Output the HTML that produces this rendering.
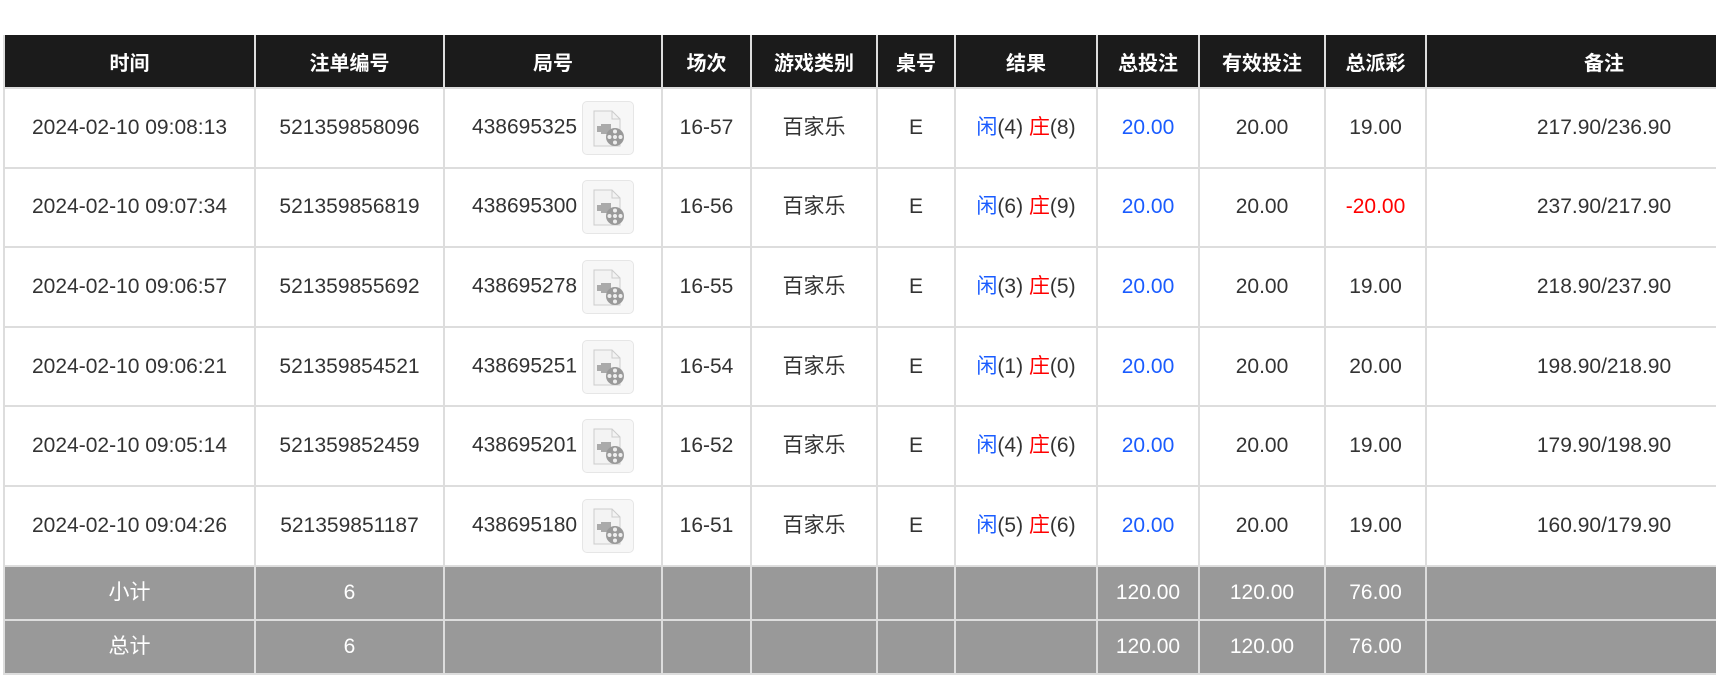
<!DOCTYPE html>
<html><head><meta charset="utf-8"><style>
html,body{margin:0;padding:0;background:#fff;width:1716px;height:691px;overflow:hidden}
table{position:absolute;left:3px;top:35px;border-collapse:collapse;table-layout:fixed;width:1780px;font-family:"Liberation Sans","Noto Sans CJK SC",sans-serif;font-size:21px;color:#333}
th{background:#1b1b1b;color:#fff;font-weight:bold;font-size:20px;height:52px;border:2px solid #ddd;border-top:none;padding:0;text-align:center}
td{height:77.6px;border:2px solid #ddd;padding:0;text-align:center;line-height:24px}
tr.f td{background:#999;color:#fff;height:52px}
.b{color:#1a5cff}.r{color:#f00}
.ic{display:inline-block;width:50px;height:52px;border:1px solid #e6e6e6;border-radius:5px;background:#f7f7f7;vertical-align:middle;margin-left:5px;position:relative}
.ic svg{position:absolute;left:8px;top:8px}
</style></head><body>
<table>
<colgroup><col style="width:251px"><col style="width:189px"><col style="width:218px"><col style="width:89px"><col style="width:126px"><col style="width:78px"><col style="width:142px"><col style="width:102px"><col style="width:126px"><col style="width:101px"><col></colgroup>
<tr><th>时间</th><th>注单编号</th><th>局号</th><th>场次</th><th>游戏类别</th><th>桌号</th><th>结果</th><th>总投注</th><th>有效投注</th><th>总派彩</th><th>备注</th></tr>
<tr><td>2024-02-10 09:08:13</td><td>521359858096</td><td>438695325<span class="ic"><svg width="36" height="38" viewBox="0 0 36 38"><path d="M3 1h18l8 8v27H3z" fill="#f3f3f3" stroke="#ccc"/><path d="M21 1v8h8" fill="none" stroke="#ccc"/><path d="M6 16h4v-2h10v10H10v-2H6z" fill="#aaa"/><circle cx="24" cy="27" r="9" fill="#999"/><circle cx="24" cy="27" r="2" fill="#eee"/><circle cx="24" cy="21.5" r="2" fill="#eee"/><circle cx="24" cy="32.5" r="2" fill="#eee"/><circle cx="18.5" cy="27" r="2" fill="#eee"/><circle cx="29.5" cy="27" r="2" fill="#eee"/></svg></span></td><td>16-57</td><td>百家乐</td><td>E</td><td><span class="b">闲</span>(4) <span class="r">庄</span>(8)</td><td class="b">20.00</td><td>20.00</td><td>19.00</td><td>217.90/236.90</td></tr>
<tr><td>2024-02-10 09:07:34</td><td>521359856819</td><td>438695300<span class="ic"><svg width="36" height="38" viewBox="0 0 36 38"><path d="M3 1h18l8 8v27H3z" fill="#f3f3f3" stroke="#ccc"/><path d="M21 1v8h8" fill="none" stroke="#ccc"/><path d="M6 16h4v-2h10v10H10v-2H6z" fill="#aaa"/><circle cx="24" cy="27" r="9" fill="#999"/><circle cx="24" cy="27" r="2" fill="#eee"/><circle cx="24" cy="21.5" r="2" fill="#eee"/><circle cx="24" cy="32.5" r="2" fill="#eee"/><circle cx="18.5" cy="27" r="2" fill="#eee"/><circle cx="29.5" cy="27" r="2" fill="#eee"/></svg></span></td><td>16-56</td><td>百家乐</td><td>E</td><td><span class="b">闲</span>(6) <span class="r">庄</span>(9)</td><td class="b">20.00</td><td>20.00</td><td class="r">-20.00</td><td>237.90/217.90</td></tr>
<tr><td>2024-02-10 09:06:57</td><td>521359855692</td><td>438695278<span class="ic"><svg width="36" height="38" viewBox="0 0 36 38"><path d="M3 1h18l8 8v27H3z" fill="#f3f3f3" stroke="#ccc"/><path d="M21 1v8h8" fill="none" stroke="#ccc"/><path d="M6 16h4v-2h10v10H10v-2H6z" fill="#aaa"/><circle cx="24" cy="27" r="9" fill="#999"/><circle cx="24" cy="27" r="2" fill="#eee"/><circle cx="24" cy="21.5" r="2" fill="#eee"/><circle cx="24" cy="32.5" r="2" fill="#eee"/><circle cx="18.5" cy="27" r="2" fill="#eee"/><circle cx="29.5" cy="27" r="2" fill="#eee"/></svg></span></td><td>16-55</td><td>百家乐</td><td>E</td><td><span class="b">闲</span>(3) <span class="r">庄</span>(5)</td><td class="b">20.00</td><td>20.00</td><td>19.00</td><td>218.90/237.90</td></tr>
<tr><td>2024-02-10 09:06:21</td><td>521359854521</td><td>438695251<span class="ic"><svg width="36" height="38" viewBox="0 0 36 38"><path d="M3 1h18l8 8v27H3z" fill="#f3f3f3" stroke="#ccc"/><path d="M21 1v8h8" fill="none" stroke="#ccc"/><path d="M6 16h4v-2h10v10H10v-2H6z" fill="#aaa"/><circle cx="24" cy="27" r="9" fill="#999"/><circle cx="24" cy="27" r="2" fill="#eee"/><circle cx="24" cy="21.5" r="2" fill="#eee"/><circle cx="24" cy="32.5" r="2" fill="#eee"/><circle cx="18.5" cy="27" r="2" fill="#eee"/><circle cx="29.5" cy="27" r="2" fill="#eee"/></svg></span></td><td>16-54</td><td>百家乐</td><td>E</td><td><span class="b">闲</span>(1) <span class="r">庄</span>(0)</td><td class="b">20.00</td><td>20.00</td><td>20.00</td><td>198.90/218.90</td></tr>
<tr><td>2024-02-10 09:05:14</td><td>521359852459</td><td>438695201<span class="ic"><svg width="36" height="38" viewBox="0 0 36 38"><path d="M3 1h18l8 8v27H3z" fill="#f3f3f3" stroke="#ccc"/><path d="M21 1v8h8" fill="none" stroke="#ccc"/><path d="M6 16h4v-2h10v10H10v-2H6z" fill="#aaa"/><circle cx="24" cy="27" r="9" fill="#999"/><circle cx="24" cy="27" r="2" fill="#eee"/><circle cx="24" cy="21.5" r="2" fill="#eee"/><circle cx="24" cy="32.5" r="2" fill="#eee"/><circle cx="18.5" cy="27" r="2" fill="#eee"/><circle cx="29.5" cy="27" r="2" fill="#eee"/></svg></span></td><td>16-52</td><td>百家乐</td><td>E</td><td><span class="b">闲</span>(4) <span class="r">庄</span>(6)</td><td class="b">20.00</td><td>20.00</td><td>19.00</td><td>179.90/198.90</td></tr>
<tr><td>2024-02-10 09:04:26</td><td>521359851187</td><td>438695180<span class="ic"><svg width="36" height="38" viewBox="0 0 36 38"><path d="M3 1h18l8 8v27H3z" fill="#f3f3f3" stroke="#ccc"/><path d="M21 1v8h8" fill="none" stroke="#ccc"/><path d="M6 16h4v-2h10v10H10v-2H6z" fill="#aaa"/><circle cx="24" cy="27" r="9" fill="#999"/><circle cx="24" cy="27" r="2" fill="#eee"/><circle cx="24" cy="21.5" r="2" fill="#eee"/><circle cx="24" cy="32.5" r="2" fill="#eee"/><circle cx="18.5" cy="27" r="2" fill="#eee"/><circle cx="29.5" cy="27" r="2" fill="#eee"/></svg></span></td><td>16-51</td><td>百家乐</td><td>E</td><td><span class="b">闲</span>(5) <span class="r">庄</span>(6)</td><td class="b">20.00</td><td>20.00</td><td>19.00</td><td>160.90/179.90</td></tr>
<tr class="f"><td>小计</td><td>6</td><td></td><td></td><td></td><td></td><td></td><td>120.00</td><td>120.00</td><td>76.00</td><td></td></tr>
<tr class="f"><td>总计</td><td>6</td><td></td><td></td><td></td><td></td><td></td><td>120.00</td><td>120.00</td><td>76.00</td><td></td></tr>
</table>
</body></html>
